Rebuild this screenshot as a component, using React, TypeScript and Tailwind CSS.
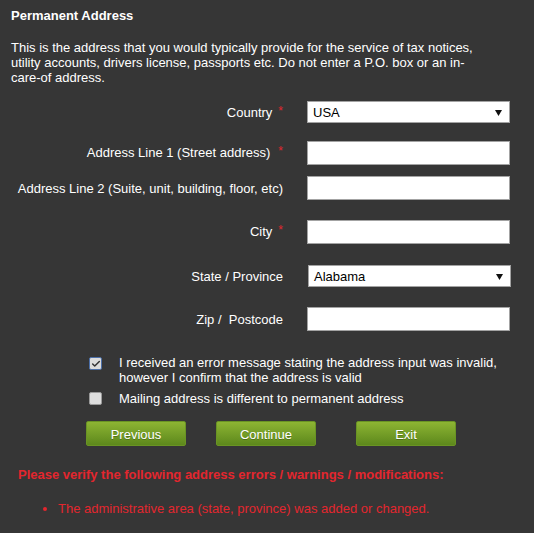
import { Check } from "lucide-react";

const font = { fontFamily: '"Liberation Sans", Arial, sans-serif' };

function Asterisk({ gap }: { gap: string }) {
  return <span className={`${gap} relative -top-[2px] text-[12px] text-[#e3262e]`}>*</span>;
}

function Label({ text, required, gap = "ml-[6px]" }: { text: string; required?: boolean; gap?: string }) {
  return (
    <div className="w-[283px] shrink-0 text-right leading-[15px] whitespace-pre">
      {text}
      {required && <Asterisk gap={gap} />}
    </div>
  );
}

function TextBox() {
  return <div className="w-[203px] h-[24px] bg-white border border-[#a3a3a3]" />;
}

function SelectBox({ value }: { value: string }) {
  return (
    <div className="w-[203px] h-[22px] bg-white border border-[#a3a3a3] flex items-center justify-between pl-[5px] pr-[7px] text-black">
      <span className="leading-[15px]">{value}</span>
      <svg width="7" height="7" viewBox="0 0 7 7">
        <path d="M0 1 H7 L3.5 7 Z" fill="#111" />
      </svg>
    </div>
  );
}

function Row({ top, children }: { top: string; children: React.ReactNode }) {
  return <div className={`${top} flex items-center gap-[24px]`}>{children}</div>;
}

function GreenButton({ label }: { label: string }) {
  return (
    <button className="w-[100px] h-[25px] rounded-[2px] border border-[#6a9424] bg-gradient-to-b from-[#8db533] to-[#5d881c] text-white text-[13px] leading-[15px] pt-[1px] [text-shadow:0_1px_0_rgba(0,0,0,0.25)]">
      {label}
    </button>
  );
}

export default function App() {
  return (
    <div style={font} className="w-[534px] h-[533px] bg-[#363636] text-white text-[13px] overflow-hidden">
      <div className="pt-[8px] pl-[11px] font-bold leading-[15px]">Permanent Address</div>
      <p className="mt-[17px] pl-[11px] w-[482px] leading-[15px]">
        This is the address that you would typically provide for the service of tax notices, utility accounts, drivers
        license, passports etc. Do not enter a P.O. box or an in-care-of address.
      </p>

      <div className="flex flex-col">
        <Row top="mt-[16px]">
          <div className="pt-[2px]">
            <Label text="Country" required />
          </div>
          <SelectBox value="USA" />
        </Row>
        <Row top="mt-[18px]">
          <Label text="Address Line 1 (Street address)" required gap="ml-[8px]" />
          <TextBox />
        </Row>
        <Row top="mt-[11px]">
          <Label text="Address Line 2 (Suite, unit, building, floor, etc)" />
          <TextBox />
        </Row>
        <Row top="mt-[20px]">
          <Label text="City" required />
          <TextBox />
        </Row>
        <Row top="mt-[21px]">
          <Label text="State / Province" />
          <div className="ml-[1px]">
            <SelectBox value="Alabama" />
          </div>
        </Row>
        <Row top="mt-[20px]">
          <Label text="Zip /  Postcode" />
          <TextBox />
        </Row>
      </div>

      <div className="mt-[24px] pl-[89px] flex items-start gap-[17px]">
        <div className="mt-[2px] w-[13px] h-[13px] shrink-0 rounded-[2px] border border-[#4c6fa8] bg-[#dcdcdc] flex items-center justify-center">
          <Check size={10} strokeWidth={3.5} className="text-[#333]" />
        </div>
        <div className="leading-[15px]">
          I received an error message stating the address input was invalid,
          <br />
          however I confirm that the address is valid
        </div>
      </div>
      <div className="mt-[6px] pl-[89px] flex items-start gap-[17px]">
        <div className="mt-[1px] w-[13px] h-[13px] shrink-0 rounded-[2px] border border-[#9a9a9a] bg-[#dedede]" />
        <div className="leading-[15px]">Mailing address is different to permanent address</div>
      </div>

      <div className="mt-[15px] pl-[86px] flex">
        <GreenButton label="Previous" />
        <div className="ml-[30px]">
          <GreenButton label="Continue" />
        </div>
        <div className="ml-[40px]">
          <GreenButton label="Exit" />
        </div>
      </div>

      <div className="mt-[21px] pl-[18px] font-bold text-[#e3262e] leading-[15px]">
        Please verify the following address errors / warnings / modifications:
      </div>
      <ul className="mt-[19px] pl-[58px] text-[#e3262e] leading-[15px] list-disc marker:text-[13px]">
        <li>The administrative area (state, province) was added or changed.</li>
      </ul>
    </div>
  );
}
